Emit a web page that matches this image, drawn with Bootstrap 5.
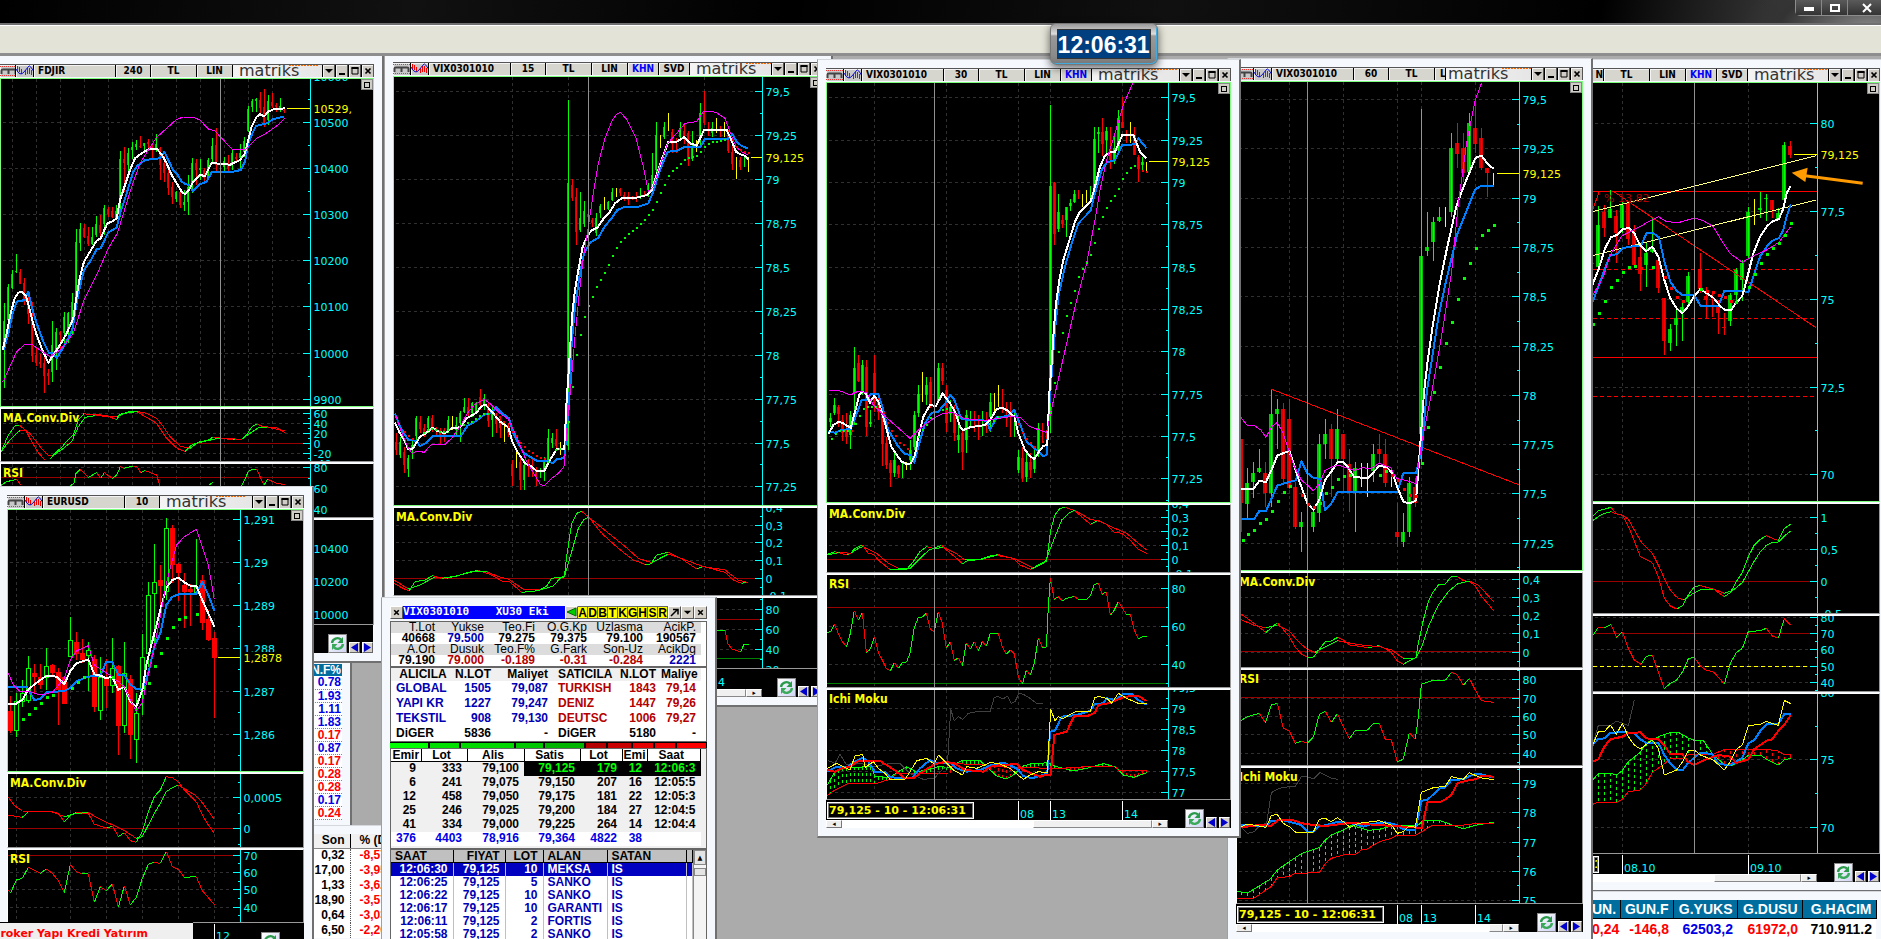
<!DOCTYPE html>
<html lang="tr">
<head>
<meta charset="utf-8">
<meta name="viewport" content="width=device-width, initial-scale=1">
<title>Matriks</title>
<link rel="stylesheet" href="https://cdn.jsdelivr.net/npm/bootstrap@5.3.0/dist/css/bootstrap.min.css">
<style>
body{background:#ababab;font-family:"DejaVu Sans Condensed","DejaVu Sans",sans-serif;font-size:10px;line-height:13px;color:#000}
button{padding:0;border:0;font:inherit;color:inherit}
.appbar{height:26px;background:radial-gradient(ellipse 130px 60px at 1870px 30px,#8a8a8a,#333 70%,transparent),linear-gradient(100deg,#000,#111 22%,#000 42%,#101010 62%,#000 85%,#555);border-bottom:1px solid #fff;box-shadow:inset 0 -2px #707070}
.appbtns{border:1px solid #8c8c8c;border-top:0;border-radius:0 0 0 5px;height:16px;margin-right:-6px}
.appbtns button{width:26px;height:15px;background:linear-gradient(#5a5a5a,#333);border-right:1px solid #888;display:flex;align-items:center;justify-content:center}
.appbtns button:last-child{width:38px}
.menustrip{height:30px;background:#e3e3d7;border-bottom:3px solid #8e8e8e}
.desk{min-height:0}
.mdi{position:absolute;background:#f5f8fd;border:solid;border-width:1px 2px 2px 1px;border-color:#d5d8dd #707070 #707070 #a0a0a0;padding:8px}
.tbar{height:13px;background:#000;border-top:1px solid #555;gap:1px;margin-bottom:1px}
.tbar button,.tbar .brand{height:12px;flex:none;overflow:hidden;background:#d6d6ce;line-height:12px;font-weight:bold;white-space:nowrap;box-shadow:inset 1px 1px #f4f4f4}
.tbar .sym{width:81px;text-align:left;padding-left:4px}
.tbar .per{width:34px}.tbar .tl{width:45px}.tbar .lin{width:35px}.tbar .khn{width:30px}
.tbar .ico{width:17px;background:#c8c8c8}
.tbar .wb{width:12px;background:#d0cdc6;border-right:1px solid #555}
.tbar svg{display:block}
.tbar .brand{flex:1 1 0;background:linear-gradient(90deg,#f4f4f4,#e6e6e6);font:normal 16px/11px "DejaVu Sans",sans-serif;color:#333;padding-left:6px;position:relative;box-shadow:none;min-width:0}
.tbar .brand::after{content:"";position:absolute;left:56px;top:0;width:30px;height:1px;background:repeating-linear-gradient(90deg,#f60 0 2px,transparent 2px 3px)}
.khn.on{color:#00f}
.pane{display:block;background:#000;border:1px solid #fff;border-color:#fff #999 #999 #fff;box-sizing:content-box;width:calc(100% - 2px);margin-bottom:1px;shape-rendering:crispEdges;overflow:hidden}
.pane.main{border-color:#7dff7d}
.pane text{font:11px "DejaVu Sans",sans-serif}
.pane .cap{font:bold 12px "DejaVu Sans Condensed","DejaVu Sans",sans-serif}
.maxi{position:absolute;right:9px;top:23px;width:12px;height:11px;background:#d0cdc6;border:1px solid #888;display:flex;align-items:center;justify-content:center}
.maxi i{width:6px;height:6px;border:1px solid #000}
.foot{height:28px;background:#000;margin-top:-1px}
.fg{gap:2px;margin-right:1px}
.tline{display:block;width:100%;height:20px;overflow:hidden}
.tline text{font:11px "DejaVu Sans",sans-serif;fill:#0ff}
.tline path{stroke:#fff;stroke-width:1;shape-rendering:crispEdges}
.readout{position:absolute;left:1px;top:2px;width:147px;height:17px;background:#000;border:1px solid #fff;outline:1px solid #777;outline-offset:-2px;color:#ff0;font:bold 11px/16px "DejaVu Sans",sans-serif;white-space:nowrap;overflow:hidden;padding-left:1px}
.sbar{height:8px;background:#fff}
.sbar button{width:16px;background:#eee;border:1px solid;border-color:#fff #777 #777 #fff;line-height:5px;font-size:7px;flex:none}
.sbar i{background:#f0f0f0;border:1px solid;border-color:#fff #888 #888 #fff}
.rf{width:19px;height:19px;background:linear-gradient(135deg,#fff,#cfd4f4);border:1px solid #888;flex:none}
.nv{width:11px;height:11px;background:#d4d0c8;border:1px solid;border-color:#fff #666 #666 #fff;flex:none}
.rf svg,.nv svg{display:block}
.w1{left:-9px;top:-1px;width:393px}.w2{left:384px;top:-3px;width:449px}.w3{left:817px;top:3px;width:424px}
.w4{left:1227px;top:2px;width:366px}.w5{left:1583px;top:3px;right:-9px}.w6{left:-2px;top:430px;width:316px}
.w7{left:381px;top:541px;width:336px;bottom:-20px;overflow:hidden}
.t1{left:290px;top:599px;width:62px}.t2{left:290px;top:769px;width:120px;bottom:-20px}.t3{left:1583px;top:835px;right:-5px;bottom:-20px;padding-right:0}
.ticker{position:absolute;left:-8px;top:866px;width:201px;bottom:0;background:#efefef;border-top:1px solid #000;color:#f00;font:bold 11px/22px "DejaVu Sans",sans-serif;white-space:nowrap;overflow:hidden}
.sheet{width:100%;table-layout:fixed;border-collapse:collapse;font:bold 12px/13px "Liberation Sans",Arial,sans-serif}
.sheet td,.sheet th{padding:0 5px 0 0;text-align:right;white-space:nowrap;overflow:hidden}
.blu{color:#0000e6}.nav7{color:#0000b4}.dred{color:#b40000}.red{color:#f00}
.t1 td{border-bottom:1px dotted #888;height:13px;background:#fff}
.t1 .sheet{line-height:12px}
.t1 .sheet th,.t1 .sheet td{padding-right:1px}
.t1 th,.t3 th{background:#006d9f;color:#fff}
.t2 th{height:14px;background:#f0f0f0;border-right:1px solid #000;border-bottom:1px solid #888}
.t2 td{height:15px;background:#fff;border-right:1px dotted #555}
.t2 .sheet .chg{text-align:left;padding-left:9px}
.t3 .sheet{font-size:14px;line-height:18px}
.t3 th{height:18px;border-right:1px solid #000;border-bottom:1px solid #000}
.t3 td{height:21px;background:#fff}.t3 .sheet td,.t3 .sheet th{padding-right:4px}
.obt{height:13px;background:#00f;color:#fff;font:bold 11px/12px "DejaVu Sans Mono",monospace;white-space:pre}
.obt button{background:#d4d0c8;color:#000;width:13px;height:13px;border:1px solid;border-color:#fff #555 #555 #fff;flex:none}
.obt .ltr{width:10px;height:13px;background:#ff0;border:1px solid #666;border-width:1px 1px 1px 0;font:bold 12px/12px "Liberation Sans",sans-serif}
.ob{border:1px solid #666;border-bottom:2px solid #666;background:#fff;margin-top:2px;padding-right:5px}
.ob+.ob{margin-top:0;border-top:0}
.o1 .sheet{line-height:11px}.o1 th,.o1 td{height:11px}.o1 th{font-weight:normal;background:#dcdcdc}
.ob.o2{border-bottom-width:1px}
.o2 td{height:15px}.o2 th{height:13px;background:#f0f0f0}.o2 .sheet .nm{text-align:left;padding-left:5px}
.depth{height:6px;background:#000;gap:2px;padding:1px 1px 0 0}
.ob.o3{background:#f0f0f0;padding-bottom:2px;margin-top:0}
.o3 th{height:12px;line-height:12px;background:#fff;border-right:1px solid #000;border-bottom:1px solid #000;text-align:center!important}
.o3 td{height:14px}.o3 .inv td.k{background:#000;color:#0f0}.o3 .tot td{background:#fff}
.o4 th{height:12px;line-height:12px;background:#c0c0c0;border-right:1px solid #000;border-bottom:1px solid #000}
.o4 td{height:13px;border-right:1px solid #c0c0c0}.o4 .sel td{background:#0000c0;color:#fff}
.o4 .sheet .nm{text-align:left;padding-left:4px}
.vs{width:13px;background:#f4f4f4;border-left:1px solid #888}
.vs button{width:12px;height:15px;background:#e4e4e4;border:1px solid #888;font-size:7px;line-height:10px}
.clk{position:absolute;left:55.8%;top:23px;width:108px;height:42px;border:1px solid #777;border-radius:6px;background:linear-gradient(#9a9a9a,#ddd 25%,#999 30%,#8a8a8a 80%,#777);padding:5px 6px;box-shadow:0 3px 8px rgba(0,0,0,.6),inset -1px -1px #4ad;z-index:5}
.clk time{display:block;height:30px;background:#003f80;border:1px solid #333;color:#fff;font:bold 23px/30px "Liberation Sans",Arial,sans-serif;text-align:center}
</style>
<script src="https://cdn.jsdelivr.net/npm/bootstrap@5.3.0/dist/js/bootstrap.bundle.min.js"></script>
</head>
<body class="vh-100 d-flex flex-column overflow-hidden position-relative">
<svg width="0" height="0" class="position-absolute">
<symbol id="im" viewBox="0 0 17 12"><path d="M0 1.5h17M0 10.5h17" stroke="#e33" stroke-dasharray="1 1"/><path d="M1.500 9V5.500Q1.500 4.500 3 4.500H14Q15.500 4.500 15.500 5.500V9M8.500 4.500V9" fill="none" stroke="#444" stroke-width="2"/></symbol>
<symbol id="iw" viewBox="0 0 18 12"><path d="M1.500 1v6M3.500 2v5M5.500 4v5M9.500 5v5M11.500 3v6M13.500 3v6M15.500 5v5" stroke="#e00"/><path d="M0 4Q4 12 8 7T13 1T18 7" fill="none" stroke="#11c"/></symbol>
<symbol id="dn" viewBox="0 0 12 12"><path d="M2 4h8l-4 4z"/></symbol>
<symbol id="mn" viewBox="0 0 12 12"><path d="M3 8h6v2H3z"/></symbol>
<symbol id="mx" viewBox="0 0 12 12"><path d="M3 2.500h6v6.500H3z" fill="none" stroke="#000"/><path d="M2.500 2h7v2h-7z"/></symbol>
<symbol id="cl" viewBox="0 0 12 12"><path d="M3.500 3.500l5 5m0-5l-5 5" stroke="#000" stroke-width="1.700"/></symbol>
<symbol id="rr" viewBox="0 0 17 17"><path d="M3 8A5.500 5.500 0 0 1 12 4.500" fill="none" stroke="#2a9a4a" stroke-width="2.400"/><path d="M14 2v6H8.500z" fill="#2a9a4a"/><path d="M14 9A5.500 5.500 0 0 1 5 12.500" fill="none" stroke="#3aaa5a" stroke-width="2.400"/><path d="M3 15V9h5.500z" fill="#3aaa5a"/></symbol>
<symbol id="pl" viewBox="0 0 9 9"><path d="M8 0v9L1 4.500z" fill="#00c"/></symbol>
<symbol id="pr" viewBox="0 0 9 9"><path d="M1 0v9l7-4.500z" fill="#00c"/></symbol>
</svg>

<header class="appbar d-flex justify-content-end flex-shrink-0">
<div class="appbtns d-flex">
<button aria-label="Simge"><svg width="12" height="10"><path d="M1 4h10v4H1z" fill="#fff"/></svg></button>
<button aria-label="Büyüt"><svg width="12" height="10"><path d="M2 2h8v6H2z" fill="none" stroke="#fff" stroke-width="2"/></svg></button>
<button aria-label="Kapat"><svg width="12" height="10"><path d="M2 1l8 8m0-8l-8 8" stroke="#fff" stroke-width="2"/></svg></button>
</div>
</header>
<div class="menustrip flex-shrink-0"></div>
<div class="clk"><time>12:06:31</time></div>

<main class="desk flex-fill position-relative overflow-hidden">

<section class="mdi t1"><table class="sheet"><thead><tr><th>N.F%</th></tr></thead><tbody class="blu">
<tr><td>0.78</td></tr><tr><td>1.93</td></tr><tr><td>1.11</td></tr><tr><td>1.83</td></tr><tr><td class="red">0.17</td></tr><tr><td>0.87</td></tr><tr><td class="red">0.17</td></tr><tr><td class="red">0.28</td></tr><tr><td class="red">0.28</td></tr><tr><td>0.17</td></tr><tr><td class="red">0.24</td></tr></tbody></table></section>

<section class="mdi t2"><table class="sheet"><colgroup><col style="width:51px"><col></colgroup><thead><tr><th>Son</th><th class="chg">% (D</th></tr></thead><tbody>
<tr><td>0,32</td><td class="red chg">-8,57</td></tr><tr><td>17,00</td><td class="red chg">-3,95</td></tr><tr><td>1,33</td><td class="red chg">-3,62</td></tr><tr><td>18,90</td><td class="red chg">-3,57</td></tr><tr><td>0,64</td><td class="red chg">-3,03</td></tr><tr><td>6,50</td><td class="red chg">-2,26</td></tr></tbody></table></section>

<section class="mdi w1">
<div class="tbar d-flex"><button class="ico" style="width:15px" aria-label="Menü"><svg width="17" height="12"><use href="#im"/></svg></button><button class="ico" aria-label="Grafik"><svg width="18" height="12"><use href="#iw"/></svg></button><button class="sym">FDJIR</button><button class="per">240</button><button class="tl">TL</button><button class="lin">LIN</button><span class="brand">matriks</span><button class="wb" aria-label="Liste"><svg width="12" height="12"><use href="#dn"/></svg></button><button class="wb" aria-label="Simge"><svg width="12" height="12"><use href="#mn"/></svg></button><button class="wb" aria-label="Büyüt"><svg width="12" height="12"><use href="#mx"/></svg></button><button class="wb" aria-label="Kapat"><svg width="12" height="12"><use href="#cl"/></svg></button></div>
<svg class="pane main" id="a1" height="327"></svg><svg class="pane" id="a2" height="52"></svg><svg class="pane" id="a3" height="53"></svg><svg class="pane" id="a4" height="104"></svg>
<div class="foot fg d-flex align-items-end justify-content-end"><button class="rf" aria-label="Yenile"><svg width="17" height="17"><use href="#rr"/></svg></button><button class="nv" aria-label="Geri"><svg width="9" height="9"><use href="#pl"/></svg></button><button class="nv" aria-label="İleri"><svg width="9" height="9"><use href="#pr"/></svg></button></div>
<button class="maxi" aria-label="Tam"><i></i></button>
</section>

<section class="mdi w2">
<div class="tbar d-flex"><button class="ico" aria-label="Menü"><svg width="17" height="12"><use href="#im"/></svg></button><button class="ico" aria-label="Grafik"><svg width="18" height="12"><use href="#iw"/></svg></button><button class="sym">VIX0301010</button><button class="per">15</button><button class="tl">TL</button><button class="lin">LIN</button><button class="khn on">KHN</button><button class="khn">SVD</button><span class="brand">matriks</span><button class="wb" aria-label="Liste"><svg width="12" height="12"><use href="#dn"/></svg></button><button class="wb" aria-label="Simge"><svg width="12" height="12"><use href="#mn"/></svg></button><button class="wb" aria-label="Büyüt"><svg width="12" height="12"><use href="#mx"/></svg></button><button class="wb" aria-label="Kapat"><svg width="12" height="12"><use href="#cl"/></svg></button></div>
<svg class="pane main" id="b1" height="428"></svg><svg class="pane" id="b2" height="87"></svg><svg class="pane" id="b3" height="70"></svg>
<div class="foot d-flex align-items-end"><div style="width:369px"><svg class="tline"><text x="318" y="17">14</text></svg><div class="sbar d-flex"><button aria-label="Sola">◂</button><i class="flex-fill"></i><button aria-label="Sağa">▸</button></div></div><span class="fg d-flex align-items-end ms-auto"><button class="rf" aria-label="Yenile"><svg width="17" height="17"><use href="#rr"/></svg></button><button class="nv" aria-label="Geri"><svg width="9" height="9"><use href="#pl"/></svg></button><button class="nv" aria-label="İleri"><svg width="9" height="9"><use href="#pr"/></svg></button></span></div>
<button class="maxi" aria-label="Tam"><i></i></button>
</section>

<section class="mdi w5">
<div class="tbar d-flex"><button class="khn" style="width:11px;text-align:right">N</button><button class="tl">TL</button><button class="lin">LIN</button><button class="khn on">KHN</button><button class="khn">SVD</button><span class="brand">matriks</span><button class="wb" aria-label="Liste"><svg width="12" height="12"><use href="#dn"/></svg></button><button class="wb" aria-label="Simge"><svg width="12" height="12"><use href="#mn"/></svg></button><button class="wb" aria-label="Büyüt"><svg width="12" height="12"><use href="#mx"/></svg></button><button class="wb" aria-label="Kapat"><svg width="12" height="12"><use href="#cl"/></svg></button></div>
<svg class="pane main" id="e1" height="418"></svg><svg class="pane" id="e2" height="109"></svg><svg class="pane" id="e3" height="75"></svg><svg class="pane" id="e4" height="159"></svg>
<div class="foot d-flex align-items-end"><div class="position-relative" style="width:225px"><svg class="tline"><path d="M30.500 1v19M156.500 1v19"/><text x="32" y="18">08.10</text><text x="158" y="18">09.10</text></svg><output class="readout" style="width:6px;padding:0">1</output><div class="sbar d-flex"><i style="width:87px" class="ms-auto"></i><button aria-label="Sağa">▸</button></div></div><span class="fg d-flex align-items-end ms-auto"><button class="rf" aria-label="Yenile"><svg width="17" height="17"><use href="#rr"/></svg></button><button class="nv" aria-label="Geri"><svg width="9" height="9"><use href="#pl"/></svg></button><button class="nv" aria-label="İleri"><svg width="9" height="9"><use href="#pr"/></svg></button></span></div>
<button class="maxi" aria-label="Tam"><i></i></button>
</section>

<section class="mdi t3"><table class="sheet"><colgroup><col style="width:28px"><col style="width:53px"><col style="width:64px"><col style="width:65px"><col style="width:74px"><col></colgroup><thead><tr><th>UN.</th><th>GUN.F</th><th>G.YUKS</th><th>G.DUSU</th><th>G.HACIM</th><th style="background:#f5f8fd;border:0"></th></tr></thead><tbody><tr><td class="red">0,24</td><td class="red">-146,8</td><td class="blu">62503,2</td><td class="red">61972,0</td><td>710.911.2</td><td style="background:#f5f8fd"></td></tr></tbody></table></section>

<section class="mdi w4">
<div class="tbar d-flex"><button class="ico" aria-label="Menü"><svg width="17" height="12"><use href="#im"/></svg></button><button class="ico" aria-label="Grafik"><svg width="18" height="12"><use href="#iw"/></svg></button><button class="sym">VIX0301010</button><button class="per">60</button><button class="tl">TL</button><button class="lin" style="width:10px;text-align:left;padding-left:5px">L</button><span class="brand" style="padding-left:2px">matriks</span><button class="wb" aria-label="Liste"><svg width="12" height="12"><use href="#dn"/></svg></button><button class="wb" aria-label="Simge"><svg width="12" height="12"><use href="#mn"/></svg></button><button class="wb" aria-label="Büyüt"><svg width="12" height="12"><use href="#mx"/></svg></button><button class="wb" aria-label="Kapat"><svg width="12" height="12"><use href="#cl"/></svg></button></div>
<svg class="pane main" id="d1" height="488"></svg><svg class="pane" id="d2" height="94"></svg><svg class="pane" id="d3" height="95"></svg><svg class="pane" id="d4" height="135"></svg>
<div class="foot d-flex align-items-end"><div class="position-relative" style="width:283px"><svg class="tline"><path d="M161.500 1v19M185.500 1v19M239.500 1v19"/><text x="163" y="18">08</text><text x="187" y="18">13</text><text x="241" y="18">14</text></svg><output class="readout">79,125 - 10 - 12:06:31</output><div class="sbar d-flex"><button aria-label="Sola">◂</button><i style="width:14px" class="ms-auto"></i><button aria-label="Sağa">▸</button></div></div><span class="fg d-flex align-items-end ms-auto"><button class="rf" aria-label="Yenile"><svg width="17" height="17"><use href="#rr"/></svg></button><button class="nv" aria-label="Geri"><svg width="9" height="9"><use href="#pl"/></svg></button><button class="nv" aria-label="İleri"><svg width="9" height="9"><use href="#pr"/></svg></button></span></div>
<button class="maxi" aria-label="Tam"><i></i></button>
</section>

<section class="mdi w3">
<div class="tbar d-flex"><button class="ico" aria-label="Menü"><svg width="17" height="12"><use href="#im"/></svg></button><button class="ico" aria-label="Grafik"><svg width="18" height="12"><use href="#iw"/></svg></button><button class="sym">VIX0301010</button><button class="per">30</button><button class="tl">TL</button><button class="lin">LIN</button><button class="khn on">KHN</button><span class="brand">matriks</span><button class="wb" aria-label="Liste"><svg width="12" height="12"><use href="#dn"/></svg></button><button class="wb" aria-label="Simge"><svg width="12" height="12"><use href="#mn"/></svg></button><button class="wb" aria-label="Büyüt"><svg width="12" height="12"><use href="#mx"/></svg></button><button class="wb" aria-label="Kapat"><svg width="12" height="12"><use href="#cl"/></svg></button></div>
<svg class="pane main" id="c1" height="419"></svg><svg class="pane" id="c2" height="67"></svg><svg class="pane" id="c3" height="112"></svg><svg class="pane" id="c4" height="109"></svg>
<div class="foot d-flex align-items-end"><div class="position-relative" style="width:342px"><svg class="tline"><path d="M192.500 1v19M224.500 1v19M296.500 1v19"/><text x="194" y="18">08</text><text x="226" y="18">13</text><text x="298" y="18">14</text></svg><output class="readout">79,125 - 10 - 12:06:31</output><div class="sbar d-flex"><button aria-label="Sola">◂</button><i style="width:119px" class="ms-auto"></i><button aria-label="Sağa">▸</button></div></div><span class="fg d-flex align-items-end ms-auto"><button class="rf" aria-label="Yenile"><svg width="17" height="17"><use href="#rr"/></svg></button><button class="nv" aria-label="Geri"><svg width="9" height="9"><use href="#pl"/></svg></button><button class="nv" aria-label="İleri"><svg width="9" height="9"><use href="#pr"/></svg></button></span></div>
<button class="maxi" aria-label="Tam"><i></i></button>
</section>

<section class="mdi w6">
<div class="tbar d-flex"><button class="ico" aria-label="Menü"><svg width="17" height="12"><use href="#im"/></svg></button><button class="ico" aria-label="Grafik"><svg width="18" height="12"><use href="#iw"/></svg></button><button class="sym">EURUSD</button><button class="per">10</button><span class="brand">matriks</span><button class="wb" aria-label="Liste"><svg width="12" height="12"><use href="#dn"/></svg></button><button class="wb" aria-label="Simge"><svg width="12" height="12"><use href="#mn"/></svg></button><button class="wb" aria-label="Büyüt"><svg width="12" height="12"><use href="#mx"/></svg></button><button class="wb" aria-label="Kapat"><svg width="12" height="12"><use href="#cl"/></svg></button></div>
<svg class="pane main" id="f1" height="261"></svg><svg class="pane" id="f2" height="73"></svg><svg class="pane" id="f3" height="72"></svg>
<div class="foot d-flex align-items-end"><svg class="tline h-100" style="width:232px"><path d="M207.500 1v27"/><text x="209" y="17">12</text></svg><button class="rf ms-auto" style="margin-right:24px" aria-label="Yenile"><svg width="17" height="17"><use href="#rr"/></svg></button></div>
<button class="maxi" aria-label="Tam"><i></i></button>
</section>

<div class="ticker">Broker Yapı Kredi Yatırım</div>

<section class="mdi w7">
<div class="obt d-flex"><button aria-label="Kapat"><svg width="11" height="11" viewBox="0 0 12 12" class="d-block"><use href="#cl"/></svg></button><span class="flex-fill overflow-hidden">VIX0301010    XU30 Eki</span><button aria-label="Geri"><svg width="11" height="11" class="d-block"><path d="M10 1v8L1 5z" fill="#0c0" stroke="#060"/></svg></button><button class="ltr">A</button><button class="ltr">D</button><button class="ltr">B</button><button class="ltr">T</button><button class="ltr">K</button><button class="ltr">G</button><button class="ltr">H</button><button class="ltr">S</button><button class="ltr">R</button><button aria-label="Ayır"><svg width="11" height="11" class="d-block"><path d="M2 9L8 3M4 2.500h5v5" fill="none" stroke="#000" stroke-width="1.500"/></svg></button><button aria-label="Liste"><svg width="11" height="11" viewBox="0 0 12 12" class="d-block"><use href="#dn"/></svg></button><button aria-label="Kapat"><svg width="11" height="11" viewBox="0 0 12 12" class="d-block"><use href="#cl"/></svg></button></div>
<div class="ob o1"><table class="sheet"><colgroup><col style="width:49px"><col style="width:49px"><col style="width:51px"><col style="width:52px"><col style="width:56px"><col></colgroup>
<tr><th>T.Lot</th><th>Yukse</th><th>Teo.Fi</th><th>O.G.Kp</th><th>Uzlasma</th><th>AcikP.</th></tr>
<tr><td>40668</td><td class="nav7">79.500</td><td>79.275</td><td>79.375</td><td>79.100</td><td>190567</td></tr>
<tr><th>A.Ort</th><th>Dusuk</th><th>Teo.F%</th><th>G.Fark</th><th>Son-Uz</th><th>AcikDg</th></tr>
<tr><td>79.190</td><td class="dred">79.000</td><td class="dred">-0.189</td><td class="dred">-0.31</td><td class="dred">-0.284</td><td class="nav7">2221</td></tr></table></div>
<div class="ob o2"><table class="sheet"><colgroup><col style="width:62px"><col style="width:43px"><col style="width:57px"><col style="width:66px"><col style="width:42px"><col></colgroup>
<tr><th class="nm">&nbsp;ALICILA</th><th>N.LOT</th><th>Maliyet</th><th class="nm">SATICILA</th><th>N.LOT</th><th>Maliye</th></tr>
<tr><td class="nm nav7">GLOBAL</td><td class="nav7">1505</td><td class="nav7">79,087</td><td class="nm dred">TURKISH</td><td class="dred">1843</td><td class="dred">79,14</td></tr>
<tr><td class="nm nav7">YAPI KR</td><td class="nav7">1227</td><td class="nav7">79,247</td><td class="nm dred">DENIZ</td><td class="dred">1447</td><td class="dred">79,26</td></tr>
<tr><td class="nm nav7">TEKSTIL</td><td class="nav7">908</td><td class="nav7">79,130</td><td class="nm dred">DEUTSC</td><td class="dred">1006</td><td class="dred">79,27</td></tr>
<tr><td class="nm">DiGER</td><td>5836</td><td>-</td><td class="nm">DiGER</td><td>5180</td><td>-</td></tr></table></div>
<div class="depth d-flex"><i style="flex:38;background:#0f0"></i><i style="flex:28;background:#00e000"></i><i style="flex:53;background:#00d800"></i><i style="flex:27;background:#00c800"></i><i style="flex:38;background:#00b400"></i><i style="flex:20;background:#b40000"></i><i style="flex:23;background:#c80000"></i><i style="flex:19;background:#e60000"></i><i style="flex:20;background:#f00000"></i><i style="flex:29;background:#f00"></i></div>
<div class="ob o3"><table class="sheet"><colgroup><col style="width:30px"><col style="width:46px"><col style="width:57px"><col style="width:56px"><col style="width:42px"><col style="width:25px"><col></colgroup>
<tr><th class="p-0">Emir</th><th>Lot</th><th>Alis</th><th>Satis</th><th>Lot</th><th class="p-0">Emi</th><th>Saat</th></tr>
<tr class="inv"><td>9</td><td>333</td><td>79,100</td><td class="k">79,125</td><td class="k">179</td><td class="k">12</td><td class="k">12:06:3</td></tr>
<tr><td>6</td><td>241</td><td>79,075</td><td>79,150</td><td>207</td><td>16</td><td>12:05:5</td></tr>
<tr><td>12</td><td>458</td><td>79,050</td><td>79,175</td><td>181</td><td>22</td><td>12:05:3</td></tr>
<tr><td>25</td><td>246</td><td>79,025</td><td>79,200</td><td>184</td><td>27</td><td>12:04:5</td></tr>
<tr><td>41</td><td>334</td><td>79,000</td><td>79,225</td><td>264</td><td>14</td><td>12:04:4</td></tr>
<tr class="tot blu"><td>376</td><td>4403</td><td>78,916</td><td>79,364</td><td>4822</td><td>38</td><td></td></tr></table></div>
<div class="ob o4 d-flex p-0"><table class="sheet nav7"><colgroup><col style="width:62px"><col style="width:52px"><col style="width:38px"><col style="width:64px"><col style="width:79px"><col></colgroup>
<tr class="text-black"><th class="nm">SAAT</th><th>FIYAT</th><th>LOT</th><th class="nm">ALAN</th><th class="nm">SATAN</th><th></th></tr>
<tr class="sel"><td>12:06:30</td><td>79,125</td><td>10</td><td class="nm">MEKSA</td><td class="nm">IS</td><td></td></tr>
<tr><td>12:06:25</td><td>79,125</td><td>5</td><td class="nm">SANKO</td><td class="nm">IS</td><td></td></tr>
<tr><td>12:06:22</td><td>79,125</td><td>10</td><td class="nm">SANKO</td><td class="nm">IS</td><td></td></tr>
<tr><td>12:06:17</td><td>79,125</td><td>10</td><td class="nm">GARANTI</td><td class="nm">IS</td><td></td></tr>
<tr><td>12:06:11</td><td>79,125</td><td>2</td><td class="nm">FORTIS</td><td class="nm">IS</td><td></td></tr>
<tr><td>12:05:58</td><td>79,125</td><td>2</td><td class="nm">SANKO</td><td class="nm">IS</td><td></td></tr></table>
<div class="vs"><button aria-label="Yukarı">▲</button><button aria-label="Kaydır" style="height:8px"></button></div></div>
</section>
</main>

<script>
// Chart data is stored in sub-pixel units: "u" units per pixel down, 3 across. "at" is the data point of each pane's top left corner.
const NS='http://www.w3.org/2000/svg';
const C={w:'#fff',b:'#0080ff',m:'#f0f',g:'#0f0',r:'#f00',y:'#ff0',k:'#404040',t:'#900',n:'#008000',p:'#ffff80'};
const pts=s=>s.trim().split(/\s+/).map(p=>p.split(',').map(Number));
function pane(id,o){
  const svg=document.getElementById(id),[ox,oy]=o.at,u=o.u||3;
  const X=v=>(v-ox)/3,Y=v=>(v-oy)/u,cx=v=>Math.round(X(v))+.5,cy=v=>Math.round(Y(v))+.5;
  const add=(t,a,txt)=>{const e=document.createElementNS(NS,t);for(const k in a)e.setAttribute(k,a[k]);if(txt)e.textContent=txt;svg.appendChild(e)};
  const H=+svg.getAttribute('height');
  const line=(x1,y1,x2,y2,c,w,d)=>add('line',{x1,y1,x2,y2,stroke:c,'stroke-width':w||1,...(d?{'stroke-dasharray':d}:{})});
  const ax=cx(o.x);
  (o.v||[]).forEach(v=>line(cx(v),0,cx(v),H,'#303030',1,'3 3'));
  const [y0,st,labels]=o.y;
  labels.forEach((l,i)=>line(2,cy(y0+i*st),ax-9,cy(y0+i*st),'#303030',1,'3 3'));
  if(o.cloud){const a=pts(o.cloud[0]),b=pts(o.cloud[1]),at=(p,x)=>{for(let i=1;i<p.length;i++)if(x<=p[i][0]){const q=p[i-1],r=p[i];return q[1]+(r[1]-q[1])*(x-q[0])/(r[0]-q[0])}return p[p.length-1][1]};
    for(let x=o.cloud[2];x<a[a.length-1][0];x+=o.cloud[3]){const m=at(a,x),n=at(b,x);if(Math.abs(m-n)>6)line(cx(x),Y(m),cx(x),Y(n),m<n?C.g:C.r,1,'3 3')}
    [[a,C.g],[b,C.r]].forEach(([p,c])=>add('polyline',{points:p.map(q=>X(q[0])+','+Y(q[1])).join(' '),fill:'none',stroke:c}))}
  (o.h||[]).forEach(([c,y,d])=>line(0,cy(y),ax,cy(y),C[c],1,d));
  if(o.c){const [x0,step,list,bw,hollow]=o.c;list.trim().split(/\s+/).forEach((s,i)=>{const c=s[0],n=s.slice(1).split(',').map(Number),x=x0+i*step;
    line(cx(x),Y(n[0]),cx(x),Y(n[1]),C[c]);
    const w=bw||2;
    if(n.length>2){const top=Math.round(Y(n[2])),h=Math.max(1,Math.round((n[3]-n[2])/u));
      if(hollow&&c==='g')add('rect',{x:cx(x)-2,y:top+.5,width:4,height:h,fill:'#000',stroke:C.g});
      else{add('rect',{x:cx(x)-.5-Math.floor(w/2),y:top,width:w,height:h,fill:c==='g'?'#00c800':hollow?'#f00':'#d80000'});line(cx(x),top,cx(x),top+h,C[c])}}})}
  (o.l||[]).forEach(s=>{const i=s.indexOf(':'),k=s.slice(0,i),p=pts(s.slice(i+1));
    if(k==='s'){for(let j=1;j<p.length;j++)add('polyline',{points:[p[j-1],p[j]].map(q=>X(q[0])+','+Y(q[1])).join(' '),fill:'none',stroke:p[j][1]<=p[j-1][1]?C.g:C.r})}
    else add('polyline',{points:p.map(q=>X(q[0])+','+Y(q[1])).join(' '),fill:'none',stroke:C[k[0]],'stroke-width':k[1]||('wb'.includes(k[0])?2:1),'stroke-linejoin':'round'})});
  const ds=o.ds||2;
  (o.d||[]).forEach(s=>{const c=s[0];pts(s.slice(2)).forEach(([x,y])=>add('rect',{x:Math.round(X(x))-1,y:Math.round(Y(y))-1,width:ds,height:ds,fill:C[c]}))});
  if(o.cross)line(cx(o.cross),0,cx(o.cross),H,'#909090');
  add('rect',{x:ax-.5,y:0,width:1,height:H,fill:'#0ff'});
  labels.forEach((l,i)=>{const y=cy(y0+i*st);line(ax-8,y,ax,y,'#0ff');add('text',{x:ax+3,y:y+4,fill:'#0ff'},l)});
  for(let y=y0-st/2;y<oy+H*u;y+=st)line(ax-3,cy(y),ax,cy(y),'#0ff');
  if(o.last){const [x,y,t]=o.last;line(X(x),cy(y),ax-1,cy(y),C.y);add('rect',{x:ax+2,y:cy(y)-6,width:46,height:12,fill:'#000'});add('text',{x:ax+3,y:cy(y)+4,fill:C.y},t)}
  if(o.cap)add('text',{x:2,y:13,fill:C.y,class:'cap'},o.cap);
  if(o.after)o.after(add,X,Y);
}
const V1=[37,109,181,253,325,397,457,529,601,673,745,817];
pane('a1',{at:[3,237],x:931,v:V1,cross:661,y:[226.5,138.5,['10600','10500','10400','10300','10200','10100','10000','9900']],last:[861,325,'10529,'],
c:[13,12,'g908,1165,963,1040 g852,965,862,960 g810,868,822,865 g762,820,812,816 r808,853,815,850 r835,915,848,905 r880,972,890,940 r905,1085,940,1070 r1045,1098,1065,1088 r1062,1105,1085,1092 r1070,1180,1090,1130 r1108,1155,1120,1130 g963,1145,1035,1115 g985,1110,997,1060 r993,1050,995,1005 g935,1035,952,1000 g935,1028,938,1000 g880,1005,905,975 g687,905,727,905 g668,752,687,730 r672,715,685,712 r680,738,708,732 g680,735,710,730 g648,712,672,705 r645,710,675,700 g615,705,625,672 r622,650,626,640 r622,655,632,650 g615,658,632,655 g453,650,477,650 r440,575,477,490 g445,530,458,495 g427,478,440,450 g420,450,432,440 r408,445,437,440 g428,452,430,440 r417,452,427,432 r430,475,440,450 g402,455,433,445 r440,540,445,495 r468,545,490,520 r500,585,520,565 r545,612,560,590 g572,605,575,595 r568,625,575,615 g570,632,605,615 g525,645,560,605 g475,580,490,560 r477,555,490,510 g477,540,505,510 r505,545,510,535 g475,540,480,535 g413,490,438,478 r383,515,435,495 r485,505 g470,515,482,500 r465,512,490,508 g450,510,460,500 r458,490,472,478 g432,510,460,475 g410,470,422,455 g318,395,328,395 g298,335,302,320 g293,335,298,305 r275,345,300,325 r267,382,322,370 g285,375,303,360 r280,325,305,318 r310,335,315,320 g293,335,318,330 r322,340,330,334'],
l:['b:12,1050 25,1000 38,940 50,905 75,900 85,875 95,920 110,970 130,1025 148,1060 158,1058 170,1075 185,1050 205,1015 218,985 228,920 240,860 252,810 270,785 290,748 302,745 325,697 350,683 362,635 380,580 400,515 412,497 435,480 480,475 493,455 505,480 518,508 530,520 545,545 555,552 568,555 578,573 600,553 620,545 635,517 700,515 722,510 735,485 745,430 755,405 768,378 800,370 820,357 853,350',
'w:8,1050 20,1000 32,940 44,895 55,878 66,876 78,888 88,925 98,965 110,1005 125,1045 145,1088 160,1065 180,1035 200,1000 220,955 228,900 240,830 252,785 270,755 290,722 302,715 322,670 335,665 350,655 360,600 375,555 390,510 405,475 425,460 445,448 470,447 485,463 500,490 515,525 530,550 545,575 555,583 567,570 580,545 600,525 615,528 635,488 660,492 690,494 720,480 735,460 745,420 755,380 770,350 780,343 793,349 805,335 820,328 855,325',
'm:5,1147 12,1140 25,1110 50,1055 75,1033 95,1033 120,1050 150,1070 180,1050 220,1000 252,900 290,825 325,745 352,700 372,635 395,560 420,490 445,450 470,412 500,385 530,358 550,351 580,352 600,360 625,387 645,393 670,420 697,448 735,450 770,415 795,402 830,378 855,355']});
pane('a2',{at:[3,1227],x:931,v:V1,cross:661,cap:'MA.Conv.Div',y:[1240,30,['60','40','20','0','-20','-40']],h:[['t',1330]],
l:['s:0,1363 25,1305 45,1278 58,1275 78,1292 95,1325 115,1358 135,1380','s:0,1360 30,1320 60,1291 78,1292 90,1300 120,1340 145,1366 158,1368 190,1345 215,1325 235,1280 255,1252 285,1247 350,1250 375,1240 410,1235 445,1255 470,1270 500,1315 530,1345 555,1354 575,1335 600,1325 620,1322 640,1311 700,1320 725,1318 740,1305 755,1280 770,1273 790,1280 830,1283 855,1298','s:150,1377 165,1360 185,1342 205,1318 220,1305 235,1260 252,1241 265,1243 320,1246 340,1255 350,1259 360,1243 385,1236 415,1235 440,1240 470,1255 490,1280 510,1310 540,1338 570,1345 590,1330 640,1318 660,1315 725,1318 750,1300 775,1283 800,1281 855,1293']});
pane('a3',{at:[3,12],x:931,v:V1,cross:661,cap:'RSI',y:[22,62.5,['80','60','40']],h:[['t',52]],
l:['s:210,78 222,70 228,40 240,28 265,52 290,38 302,55 313,38 337,55 350,45 361,20 372,25 400,18 412,20 422,38 435,32 470,45 480,78','s:0,78 20,65 50,58 62,75','s:725,78 745,35 755,28 770,28 792,75 803,58 830,70 855,74','s:628,75 640,65']});
pane('a4',{at:[3,180],x:931,y:[264,99,['10400','10200','10000']]});

const V2=[397,565,973];
pane('b1',{at:[42,231],x:1145,v:V2,cross:625,y:[274,131.7,['79,5','79,25','79','78,75','78,5','78,25','78','77,75','77,5','77,25']],last:[1113,472,'79,125'],
c:[49,12,'r1300,1365,1325,1350 g1310,1375,1325,1365 r1340,1418,1355,1395 g1365,1430,1375,1408 g1320,1378,1335,1345 g1248,1320,1255,1310 r1248,1300,1265,1285 r1272,1310,1285,1300 g1248,1300,1255,1285 r1245,1295,1255,1290 r1280,1310,1285,1295 r1285,1335,1290,1308 r1285,1325,1290,1305 g1248,1300,1260,1290 y1248,1290 g1252,1310,1275,1290 g1232,1325,1240,1270 g1193,1240,1220,1235 r1193,1250,1222,1240 g1205,1250,1210,1240 g1205,1240,1208,1235 r1166,1230,1190,1215 g1182,1230,1195,1215 r1205,1280,1215,1262 g1222,1312,1240,1260 r1240,1300,1250,1270 r1255,1313,1260,1285 y1262,1325 r1268,1310,1275,1300 r1380,1457,1393,1430 y1350,1403 r1375,1470,1385,1440 g1380,1470,1395,1440 r1378,1430 r1375,1432,1395,1410 r1400,1457,1410,1430 g1405,1435 g1370,1443,1385,1415 g1287,1395,1313,1380 g1298,1345,1315,1330 r1287,1350,1318,1340 y1325,1365 g1340,1370 g300,1350,550,1340 r537,602,555,595 r563,735,590,695 g577,695,655,690 g602,682,632,670 r640,655,642,652 r655,682,660,670 g640,708,655,700 g613,655,618,640 y590,630 g602,630,605,625 g563,602,575,600 y563,592 r563,588,568,580 r575,602,585,598 r575,615,588,600 r588,600 r575,605 g563,598 r573,590 g550,590 g458,575,525,570 g366,530,405,510 y405,443 g366,418,380,410 y338,392 r388,458,395,430 r415,458 g366,420,385,412 r370,432,392,410 r393,498,400,480 g393,483,440,475 y420,455 g310,440,340,430 r272,375,340,370 r366,408 g366,410,385,400 y355,400 r378,412 y366,412 r390,460,400,455 r435,510,455,490 y470,538 r470,510,480,500 g470,500 y470,515'],
l:['b:45,1240 60,1280 85,1320 108,1322 120,1338 140,1328 158,1308 243,1307 262,1278 290,1262 315,1242 335,1240 348,1220 365,1238 387,1255 400,1300 430,1358 470,1382 505,1383 517,1390 530,1378 553,1374 565,1240 570,1150 575,1030 585,920 600,820 612,760 630,728 655,713 675,678 695,655 712,630 735,620 775,620 805,610 820,575 840,510 863,455 890,453 915,440 962,440 975,416 1045,416 1057,402 1070,425 1085,438 1105,446',
'w:45,1268 60,1300 75,1325 85,1348 97,1348 120,1310 135,1302 158,1283 172,1293 195,1300 215,1285 240,1282 260,1255 290,1238 305,1217 317,1215 340,1240 360,1265 385,1282 397,1325 415,1360 435,1390 455,1400 470,1413 493,1412 510,1380 530,1348 553,1347 560,1200 567,1100 573,1000 578,930 585,870 597,800 608,740 625,703 637,690 652,683 675,650 688,638 705,610 725,595 765,594 800,585 815,570 825,540 845,480 865,425 890,425 912,412 930,430 950,437 972,390 1040,390 1052,415 1068,455 1080,462 1095,468 1104,478',
'm:45,1240 62,1290 85,1345 97,1360 110,1353 133,1357 155,1332 195,1333 215,1315 240,1280 262,1240 285,1212 313,1198 335,1215 360,1240 385,1258 410,1310 440,1385 470,1435 480,1452 493,1458 515,1435 535,1420 552,1400 563,1260 575,1130 585,1010 597,890 610,770 625,680 640,580 655,490 675,415 697,360 712,340 722,338 740,358 768,415 790,500 805,575 820,560 835,510 863,430 890,400 915,370 950,365 970,335 990,333 1010,338 1035,355 1050,395 1068,440 1085,455 1105,465'],
d:['g:133,1300 145,1290 157,1287 169,1290 181,1297 193,1297 205,1290 253,1275 265,1270 277,1265 289,1256 301,1248 313,1243 325,1241 505,1385 529,1350 541,1347 567,1266 579,1161 591,1066 603,1004 615,952 627,918 639,890 651,860 663,840 675,819 687,795 699,769 711,744 723,726 735,714 747,703 759,692 771,684 783,672 795,659 807,646 819,631 831,607 843,580 855,554 867,529 879,514 891,504 903,491 915,480 927,475 939,470 951,467 963,455 975,440 987,431 999,427 1011,425 1023,422 1035,420','r:75,1295 87,1308 99,1316 349,1245 361,1252 373,1265 387,1280 399,1295 411,1308 423,1328 435,1342 447,1352 459,1358 471,1368 483,1374 495,1378 1060,420 1072,442 1084,450 1096,457 1107,460']});
pane('b2',{at:[42,84],x:1145,v:V2,cross:625,cap:'MA.Conv.Div',y:[81,53,['0,4','0,3','0,2','0,1','0','-0,1']],h:[['t',293]],
l:['s:42,310 65,323 87,333 105,305 135,300 158,287 185,295 230,288 265,277 295,271 330,283 370,305 390,306 425,337 475,332 500,318 515,295 553,290 560,230 575,130 590,100 605,94 625,110 665,160 715,205 760,240 795,253 812,252 830,225 865,217 905,237 950,267 970,259 1035,277 1060,300 1085,310 1105,306','s:42,300 85,327 120,315 165,291 200,295 240,285 280,275 320,275 355,290 385,297 430,328 480,330 520,318 540,295 553,291 575,215 595,145 612,118 627,112 680,155 730,195 775,235 815,248 865,222 930,245 970,260 1035,270 1075,300 1105,308']});
pane('b3',{at:[42,354],x:1145,v:V2,y:[388,60,['80','60','40','20']],h:[['t',418],['n',535]],l:['s:1000,451 1035,451 1043,490 1055,507 1082,516 1092,493 1107,493']});

const V3=[193,409,625,721,937];
pane('c1',{at:[51,249],x:1073,v:V3,cross:373,y:[292,127,['79,5','79,25','79','78,75','78,5','78,25','78','77,75','77,5','77,25']],last:[1018,484,'79,125'],
c:[61,12,'g1240,1280,1255,1268 g1193,1245,1215,1240 r1215,1280,1220,1240 r1245,1322,1260,1300 r1240,1333,1290,1310 g1233,1347,1245,1305 g1040,1275,1105,1180 r1065,1145,1090,1143 g1080,1185,1095,1180 r1080,1308,1100,1280 g1230,1280,1265,1270 r1065,1235,1120,1210 r1190,1260,1200,1235 r1220,1397,1235,1330 r1310,1408,1330,1395 r1380,1460,1390,1420 g1350,1430,1380,1420 r1395,1433,1398,1422 g1390,1433 y1385,1410 g1320,1410,1350,1380 g1233,1350,1245,1340 g1155,1250,1183,1240 y1117,1205 g1130,1215,1155,1185 r1130,1225,1145,1210 r1190,1215 g1090,1210,1105,1205 r1090,1155,1105,1145 r1155,1295,1170,1270 g1200,1265,1220,1240 r1215,1322,1230,1300 g1245,1358,1305,1320 r1285,1410,1300,1358 g1230,1358,1245,1320 g1233,1283 r1233,1295 r1245,1320 g1233,1308 r1235,1300 g1180,1295,1205,1250 y1180,1235 y1155,1220 r1168,1240 r1205,1280 r1205,1310 g1240,1310 g1350,1420,1370,1410 r1340,1447,1375,1435 g1350,1447,1385,1430 r1360,1433,1385,1410 g1345,1420,1375,1408 g1270,1370,1285,1355 r1270,1330 r1290,1340 g315,1300,558,1155 r545,735,548,700 g582,697,635,685 r645,685,660,672 g620,710,622,660 g597,632,610,620 g570,610,582,605 r570,598 y582,622 y570,610 g558,605 g380,580,418,570 g380,458,395,402 r353,467,395,432 g380,460,393,420 r380,508,455,480 g400,492,445,480 g330,460,355,450 r290,385,365,382 r390,430 y366,430 r380,465,405,465 r465,545,470,505 g470,515,485,495 y487,520',3],
l:['b:55,1295 75,1298 95,1290 122,1287 135,1255 155,1200 170,1200 182,1182 205,1183 217,1220 235,1290 265,1340 285,1362 303,1365 313,1388 325,1340 345,1270 365,1238 385,1235 410,1205 420,1185 432,1198 455,1258 530,1262 540,1290 560,1252 595,1248 613,1230 625,1260 650,1325 680,1350 700,1368 710,1365 717,1230 727,1100 735,990 745,890 765,800 785,730 805,670 842,632 855,580 875,510 890,488 915,480 937,435 975,433 985,415 1010,445',
'w:55,1303 70,1275 85,1266 97,1268 122,1284 135,1235 148,1185 158,1175 168,1182 180,1208 193,1187 205,1205 215,1235 228,1280 243,1338 260,1365 275,1385 290,1392 303,1390 315,1365 325,1310 340,1250 360,1215 378,1218 398,1180 420,1210 435,1235 450,1280 460,1290 480,1282 525,1275 540,1260 560,1228 575,1223 590,1230 613,1250 625,1300 645,1350 660,1368 673,1377 690,1350 700,1338 712,1335 718,1180 725,1090 732,980 738,910 748,840 760,780 780,715 795,665 808,638 842,604 855,560 870,500 885,467 900,457 915,455 937,405 970,405 980,430 990,455 1010,475',
'm:55,1170 85,1171 122,1185 145,1173 170,1178 190,1215 220,1245 255,1275 300,1315 330,1285 370,1255 400,1240 430,1238 460,1255 520,1262 600,1250 630,1252 660,1280 710,1298 725,1225 770,1030 800,900 830,790 855,660 870,570 890,480 915,400 940,315 968,250'],
d:['g:65,1318 77,1303 89,1293 101,1293 113,1293 137,1273 149,1248 161,1228 173,1222 185,1222 197,1222 327,1310 339,1290 351,1275 363,1255 399,1230 411,1228 541,1272 553,1262 565,1250 723,1240 735,1148 747,1056 759,1000 771,949 783,910 795,872 807,832 819,808 831,788 843,766 855,730 867,688 879,652 891,625 903,603 915,588 927,566 939,538 951,519 963,505 975,499','r:125,1293 209,1228 221,1240 233,1268 245,1294 257,1308 269,1330 281,1335 293,1348 628,1272 640,1300 652,1318 664,1330 676,1340 700,1325 1000,512 1012,515']});
pane('c2',{at:[51,45],x:1073,v:V3,cross:373,cap:'MA.Conv.Div',y:[38,42,['0,4','0,3','0,2','0,1','0','-0,1']],h:[['t',206]],
l:['s:52,193 75,185 110,195 122,190 135,175 157,164 175,190 190,193 210,215 240,238 290,238 310,215 330,185 350,170 370,175 395,166 410,180 440,205 457,222 470,213 510,208 540,198 565,194 610,206 630,225 662,238 690,222 710,213 722,120 735,75 750,55 765,52 795,62 820,85 842,103 862,92 890,103 912,126 935,130 960,150 985,178 1010,190','s:52,195 90,187 122,190 150,172 160,170 200,190 235,220 265,235 300,235 335,200 360,178 400,172 440,192 465,210 510,209 560,196 610,205 640,220 670,235 705,217 725,165 755,90 780,67 795,61 840,88 870,93 915,115 950,130 985,160 1010,180']});
pane('c3',{at:[51,255],x:1073,v:V3,cross:373,cap:'RSI',y:[295,114,['80','60','40']],h:[['t',352],['n',580]],
l:['s:52,427 62,425 73,403 85,430 97,455 110,470 121,430 133,362 145,390 157,368 169,487 181,478 193,440 205,488 217,510 229,535 241,543 253,518 265,535 277,518 289,517 300,490 313,412 325,382 337,382 349,370 361,418 373,425 385,365 397,400 409,475 421,455 433,512 445,503 457,528 469,458 481,478 493,455 505,483 517,455 529,468 541,430 565,430 577,470 589,493 601,480 613,492 625,560 637,582 649,541 661,555 673,520 685,443 697,472 709,472 715,350 721,265 733,328 745,320 757,333 769,325 793,319 805,328 829,328 841,318 853,283 865,280 877,313 889,305 901,376 913,360 925,335 949,373 961,373 973,420 985,447 997,440 1010,439']});
pane('c4',{at:[51,600],x:1073,v:V3,cross:373,cap:'Ichi Moku',y:[592,62.7,['79,5','79','78,5','78','77,5','77']],
cloud:['52,885 75,845 100,833 185,830 195,860 240,862 265,845 290,830 320,845 350,840 385,830 420,832 455,812 510,812 530,830 560,858 590,867 610,855 640,828 660,822 715,818 740,830 790,843 830,835 880,821 915,830 940,855 972,862 1010,848','52,917 75,900 115,880 200,880 240,868 260,850 420,849 430,820 460,822 530,825 590,832 660,833 740,836 830,830 915,828 925,841 1010,841',61,12],
l:['k:55,812 75,820 90,793 110,825 150,820 190,830 240,820 270,820 300,850 340,868 373,865 395,840 412,830 422,658 433,692 445,680 458,688 475,670 500,665 540,665 553,622 565,620 580,627 592,618 604,640 615,635 627,610 640,613 660,625 680,640 698,641',
'b2:52,845 80,830 110,832 135,815 158,803 175,815 195,845 225,845 240,862 305,865 330,835 360,810 378,820 420,818 440,835 470,845 510,840 545,825 580,818 620,835 640,858 665,865 700,855 712,850 720,725 735,722 755,680 800,675 840,663 855,642 880,640 890,625 915,630 940,612 965,612 985,630 1010,645',
'r2:52,840 75,845 95,835 120,830 145,813 210,813 230,825 260,845 285,865 310,865 330,850 375,822 400,817 430,818 465,840 520,845 545,828 620,822 640,840 665,850 690,860 705,855 722,854 733,735 770,725 792,679 835,677 855,668 865,645 895,640 920,630 945,620 985,618 1010,633',
'y:52,835 80,820 100,830 120,840 135,798 158,793 165,832 190,815 205,835 225,850 240,868 285,868 300,845 320,812 350,805 372,822 385,795 410,820 430,840 457,855 470,830 500,835 540,818 565,820 600,835 640,868 660,855 685,845 712,848 722,658 735,692 745,680 758,686 800,663 840,665 855,622 868,620 890,625 905,640 925,610 950,625 985,640 1010,640']});

const V4=[193,355,517,589,751];
pane('d1',{at:[36,230],u:2.8,x:883,v:V4,cross:247,y:[278,138,['79,5','79,25','79','78,75','78,5','78,25','78','77,75','77,5','77,25']],last:[817,485,'79,125'],
c:[49,18,'r1230,1490,1230,1410 g1310,1450,1352,1410 g1295,1395,1325,1350 g1258,1325,1310,1322 r1295,1420,1325,1380 g1090,1420,1160,1380 g1117,1258,1145,1158 r1130,1358,1145,1340 r1118,1370,1173,1365 r1350,1482,1365,1478 g1435,1545,1463,1478 r1478,1480 g1420,1490,1435,1478 g1215,1463,1243,1435 g1173,1285,1215,1243 r1187,1393,1202,1285 g1145,1300,1202,1285 r1215,1380,1215,1285 r1258,1435,1300,1375 g1295,1490,1310,1375 y1297,1365 y1297,1393 g1243,1350,1272,1320 r1215,1300,1258,1272 r1230,1365,1272,1352 y1310,1365 r1408,1532,1490,1503 g1437,1532,1490,1518 g1337,1503,1352,1490 r1340,1420,1365,1410 g305,1300,718,1215 g595,718,693,705 g608,732,623,678 g580,622,608,620 y580,636 g372,608,415,593 r345,470,400,430 r372,510,415,485 g318,490,345,483 r280,430,358,402 r358,475,387,470 r470,552,472,485 y485,525',4],
l:['r:139,1090 882,1358','b:44,1455 88,1453 103,1431 123,1431 157,1360 193,1350 213,1345 229,1292 247,1325 265,1338 285,1342 300,1428 318,1412 338,1378 517,1377 535,1325 573,1325 590,1260 605,1100 625,980 640,890 660,800 697,655 725,590 751,530 769,521 806,521',
'w:44,1368 85,1370 103,1347 123,1350 140,1315 157,1276 193,1263 203,1290 220,1340 247,1410 265,1428 283,1400 300,1345 318,1322 338,1295 355,1295 370,1310 388,1337 430,1338 463,1305 485,1308 502,1325 517,1365 535,1405 553,1410 573,1402 583,1280 597,1100 608,1010 622,920 643,800 665,700 695,575 715,525 735,480 751,443 769,436 790,462 806,473',
'm:44,1165 67,1192 88,1192 108,1205 123,1225 140,1195 157,1183 175,1215 205,1300 229,1345 247,1358 265,1375 283,1355 300,1318 320,1308 340,1303 390,1318 410,1310 437,1312 463,1298 497,1310 515,1340 553,1348 573,1355 590,1240 620,1100 650,940 680,760 700,570 725,400 751,280 770,232'],
ds:3,d:['g:53,1513 70,1496 88,1485 106,1465 124,1454 142,1430 160,1402 178,1378 196,1360 286,1410 304,1382 322,1363 340,1342 358,1332 376,1330 466,1330 484,1320','r:232,1385 250,1412 268,1420 502,1330 520,1345 538,1370 556,1385 574,1390','g:591,1298 609,1196 627,1098 645,1027 663,961 681,901 699,838 717,780 735,738 753,694 771,659 789,645 807,631']});
pane('d2',{at:[36,69],x:883,v:V4,cross:247,cap:'MA.Conv.Div',y:[86,54.7,['0,4','0,3','0,2','0,1','0','-0,1']],h:[['t',304]],
l:['s:46,190 80,215 123,247 157,218 193,260 211,292 229,312 247,322 265,322 283,298 301,275 318,273 338,262 355,270 375,285 430,293 463,287 497,305 517,333 535,343 553,332 573,322 580,280 595,210 610,155 625,125 640,105 661,102 679,79 697,79 715,92 735,95 751,108 769,138 806,182','s:46,208 90,227 123,233 157,226 193,243 220,275 247,298 270,307 301,290 338,272 400,284 463,290 500,300 535,325 573,324 590,290 610,230 640,165 670,125 697,102 720,96 735,94 760,105 806,155']});
pane('d3',{at:[36,360],x:883,v:V4,cross:247,cap:'RSI',y:[388,55,['80','70','60','50','40']],h:[['t',442]],
l:['s:46,513 67,500 103,490 121,518 139,465 157,460 175,535 193,543 211,580 229,574 247,579 265,562 283,493 301,484 319,517 337,491 355,530 373,567 391,541 427,541 445,520 463,520 481,568 499,570 517,635 535,628 553,548 571,568 580,500 589,403 625,391 661,391 679,367 697,374 715,406 733,385 751,420 769,452 806,457']});
pane('d4',{at:[36,654],x:883,v:V4,cross:247,cap:'Ichi Moku',y:[700,87.3,['79','78','77','76','75']],
cloud:['36,1024 67,1029 88,1017 136,987 157,960 193,935 229,911 283,893 301,870 319,855 355,840 380,826 430,841 463,838 500,828 580,825 595,811 643,811 690,828 715,836 760,824 806,817','36,1046 85,1046 103,1034 139,1009 157,983 193,980 211,970 283,968 301,940 319,925 355,915 391,914 409,900 427,897 463,875 499,865 517,855 573,855 590,845 620,827 700,827 740,822 806,820',49,18],
l:['k:46,830 67,850 88,845 105,825 125,820 139,728 157,718 175,712 211,709 229,680 247,680 265,687 285,667 301,675 320,685 338,688',
'b2:46,825 100,828 123,828 139,812 175,811 193,815 229,825 247,845 265,846 283,828 301,826 340,815 380,820 415,830 440,822 480,817 517,825 535,838 571,840 580,800 589,752 607,750 643,716 661,712 679,690 715,688 733,678 751,672 775,674 806,683',
'r2:46,833 100,825 139,827 160,811 205,811 240,822 300,828 380,818 415,822 500,828 571,832 590,835 600,790 607,757 643,757 661,748 679,735 697,700 725,692 751,688 769,678 806,680',
'y:46,832 67,822 123,832 139,797 157,793 175,820 193,830 211,846 265,846 283,808 301,805 319,815 337,803 355,815 375,832 400,820 463,812 500,826 517,850 535,845 553,828 571,832 580,780 589,727 625,713 661,709 679,680 715,688 733,668 751,676 775,686 806,688']});

const V5=[157,535];
pane('e1',{at:[69,249],x:740,v:V5,cross:373,y:[370,263.2,['80','77,5','75','72,5','70']],last:[672,463,'79,125'],
h:[['r',574],['r',808,'4 3'],['r',955,'4 3'],['r',1072],['r',1189,'4 3']],
c:[67,18,'r760,870,790,792 g618,810,675,800 r615,710,635,682 g570,655,628,655 r630,790,648,700 g605,700,615,683 r605,735,610,718 r675,805,700,795 r730,873,770,822 g728,860,760,795 g655,760,740,755 r770,880,780,863 r893,1065,895,1023 g972,1052,988,1030 g920,1037,955,975 g905,1022,922,940 g815,915,828,905 r808,818 r760,880,810,868 r860,955,888,900 r880,950 r900,1002,915,940 r940,1005,980,984 g880,978,885,962 g805,908,810,885 g780,902,788,840 g620,775,635,768 y597,675 g575,655,625,632 g582,662,595,598 r600,655,600,630 g625,658,638,655 g425,600,435,600 r423,475,438,465',4],
l:['p:66,635 738,467','p:66,767 738,600','r:130,574 738,983','r:66,635 88,574',
'b:66,910 85,860 103,810 121,765 140,763 157,745 180,740 213,737 230,698 247,698 267,712 283,785 301,845 320,872 337,885 373,885 391,917 445,917 463,873 517,873 535,877 550,830 571,768 590,740 607,722 627,714 640,690 650,650 662,613',
'w:66,858 85,810 105,745 123,712 140,705 160,687 177,684 193,700 210,735 229,753 247,740 265,770 283,840 301,895 320,925 337,940 355,918 373,888 391,867 410,880 430,893 450,918 465,930 483,930 499,908 517,888 530,840 550,760 570,710 590,680 607,664 627,657 640,625 650,580 662,557',
'm:66,890 100,830 121,765 155,708 200,685 245,660 265,650 290,665 325,668 373,654 400,662 430,680 460,730 480,760 517,787 545,770 590,750 627,727 662,680'],
ds:3,d:['g:70,973 88,940 106,904 124,862 142,840 160,815 178,800 196,797 250,800 394,868 499,905 538,860 555,823 572,788 591,762 609,743 627,730 645,704 663,670','r:214,803 286,832 304,865 322,890 340,904 412,873 430,875 448,885 466,890 484,903'],
after(add,X,Y){add('text',{x:X(102),y:Y(606),fill:'#b00000'},'% 13,82');
 add('line',{x1:X(878),y1:Y(550),x2:X(705),y2:Y(527),stroke:'#ff9a00','stroke-width':3,'shape-rendering':'auto'});
 add('polygon',{points:[[665,518],[713,503],[706,546]].map(p=>X(p[0])+','+Y(p[1])).join(' '),fill:'#ff9a00','shape-rendering':'auto'})}});
pane('e2',{at:[69,42],x:740,v:V5,cross:373,y:[82,96,['1','0,5','0','-0,5']],h:[['t',274]],
l:['s:68,80 85,62 123,52 140,73 157,75 180,120 211,200 247,218 265,260 283,325 301,348 320,357 338,347 355,315 373,290 391,287 430,297 463,320 481,308 499,275 517,247 535,200 553,165 571,148 589,137 625,152 643,115 662,103','s:68,92 95,73 123,65 140,72 157,76 175,88 193,120 213,155 247,190 265,225 285,270 301,300 320,322 340,330 373,308 395,297 430,297 463,310 490,300 517,278 550,218 571,185 590,165 607,157 625,156 643,138 662,123']});
pane('e3',{at:[69,378],x:740,v:V5,cross:373,y:[382,48.2,['80','70','60','50','40']],h:[['t',430],['y',529,'4 3']],
l:['s:68,437 85,412 103,414 123,404 140,443 157,425 175,475 193,510 213,523 229,499 247,496 283,596 301,580 320,570 338,545 355,506 373,502 391,528 409,541 430,545 463,582 481,520 499,488 517,475 535,425 571,422 589,415 607,438 625,444 643,386 662,406']});
pane('e4',{at:[69,612],x:740,v:V5,cross:373,y:[606,202,['80','75','70']],
cloud:['68,870 85,851 123,850 140,855 157,842 175,815 211,787 229,758 265,740 301,728 325,727 355,744 373,751 400,752 430,795 463,823 484,828 517,810 535,796 571,795 590,808 625,825 643,810 662,805','68,943 85,937 140,937 157,928 175,905 211,900 229,880 247,847 283,822 301,806 337,805 357,793 430,793 463,778 590,778 625,783 643,794 662,794',85,18],
l:['k:68,765 85,706 121,706 140,693 175,707 193,630','b2:68,765 85,747 103,745 121,729 157,726 193,729 211,748 229,758 265,758 283,795 301,820 320,840 338,840 355,818 391,788 427,792 445,822 481,825 517,803 535,760 553,750 571,723 590,702 625,702 643,672 662,672',
'r2:68,815 85,808 103,770 121,748 157,740 175,730 211,727 229,745 265,748 283,765 301,793 337,793 355,817 373,825 391,815 445,795 481,800 499,819 535,808 553,777 590,752 607,748 625,722 643,705 662,675',
'y:68,765 85,725 103,725 121,705 139,733 157,700 175,740 193,765 211,777 247,750 265,775 283,855 320,840 338,815 355,782 373,780 391,795 430,810 463,840 481,815 499,778 517,765 535,707 571,703 589,694 625,706 643,631 662,641']});

const V6=[49,211,319,427,535,643];
pane('f1',{at:[24,150],x:721,v:V6,y:[176,129,['1,291','1,29','1,289','1,288','1,287','1,286']],last:[654,592,'1,2878'],
c:[31,18,'r708,820,752,812 g700,830,722,810 g660,740,700,725 g588,728,625,720 r612,698,640,652 r612,688,652,675 g565,690,617,650 r612,648,615,640 r625,795,635,690 r650,730,650,730 g472,590,540,587 r515,600,545,580 r537,610,578,598 g545,692,570,585 r585,755,597,740 g590,780,650,748 r598,743,655,680 g535,700,625,676 r615,885,617,797 g545,820,640,797 r645,897,657,825 g700,910,760,838 g522,765,592,690 g365,620,405,580 g253,560,367,400 r315,450,360,377 g175,420,205,395 r195,370,205,317 r308,422,312,338 r338,503,376,396 r372,497,388,398 g236,395,380,395 r345,510,360,490 r450,542,478,540 r515,773,533,593',5,1],
l:['b:25,680 80,680 103,720 121,717 140,697 193,693 211,683 229,665 260,650 301,648 319,605 337,607 355,645 373,645 391,673 409,687 427,687 445,640 463,560 481,520 499,435 517,410 540,402 589,402 607,366 625,405 643,452',
'w:25,733 48,731 68,718 85,688 110,668 140,647 170,650 193,673 211,633 229,610 265,598 283,643 305,648 319,655 337,650 355,690 373,680 391,725 409,740 427,690 440,610 463,520 481,450 499,383 517,360 535,353 553,367 571,377 589,378 607,420 625,460 643,500',
'm:25,640 40,675 60,695 85,693 121,705 157,697 193,655 211,600 229,573 265,557 283,615 301,627 337,650 373,680 391,720 409,753 427,728 463,560 481,470 499,370 517,300 530,255 553,230 589,208 607,260 625,315 643,418'],
ds:3,d:['g:70,776 88,761 106,745 124,730 142,712 160,705 215,685 233,665 251,652 340,650 448,670 465,619 483,580 501,533 519,500 537,477 555,472 591,461']});
pane('f2',{at:[24,942],x:721,v:V6,cap:'MA.Conv.Div',y:[1012,93,['0,0005','0']],h:[['t',1105]],
l:['s:25,1065 67,1072 85,1056 140,1053 175,1060 193,1086 211,1065 229,1058 265,1060 283,1093 320,1104 338,1098 355,1130 373,1118 391,1142 409,1147 427,1115 445,1055 463,1010 481,990 499,950 517,953 535,965 553,990 589,1025 607,1065 625,1095 643,1120','s:25,1012 45,1038 67,1053 157,1055 193,1070 229,1060 265,1058 301,1078 338,1095 373,1112 409,1135 427,1130 445,1095 463,1060 481,1030 499,995 517,983 535,975 589,1008 607,1028 643,1078']});
pane('f3',{at:[24,1170],x:721,v:V6,cap:'RSI',y:[1184,52,['70','60','50','40']],h:[['t',1184]],
l:['s:25,1290 32,1298 49,1260 67,1255 85,1222 121,1240 139,1227 157,1240 175,1262 193,1298 211,1214 229,1235 247,1241 265,1241 283,1327 301,1280 319,1292 337,1272 355,1342 373,1277 391,1335 409,1312 427,1255 445,1213 463,1207 481,1210 499,1175 517,1220 535,1228 553,1252 589,1250 607,1292 643,1334']});
</script>
</body>
</html>
